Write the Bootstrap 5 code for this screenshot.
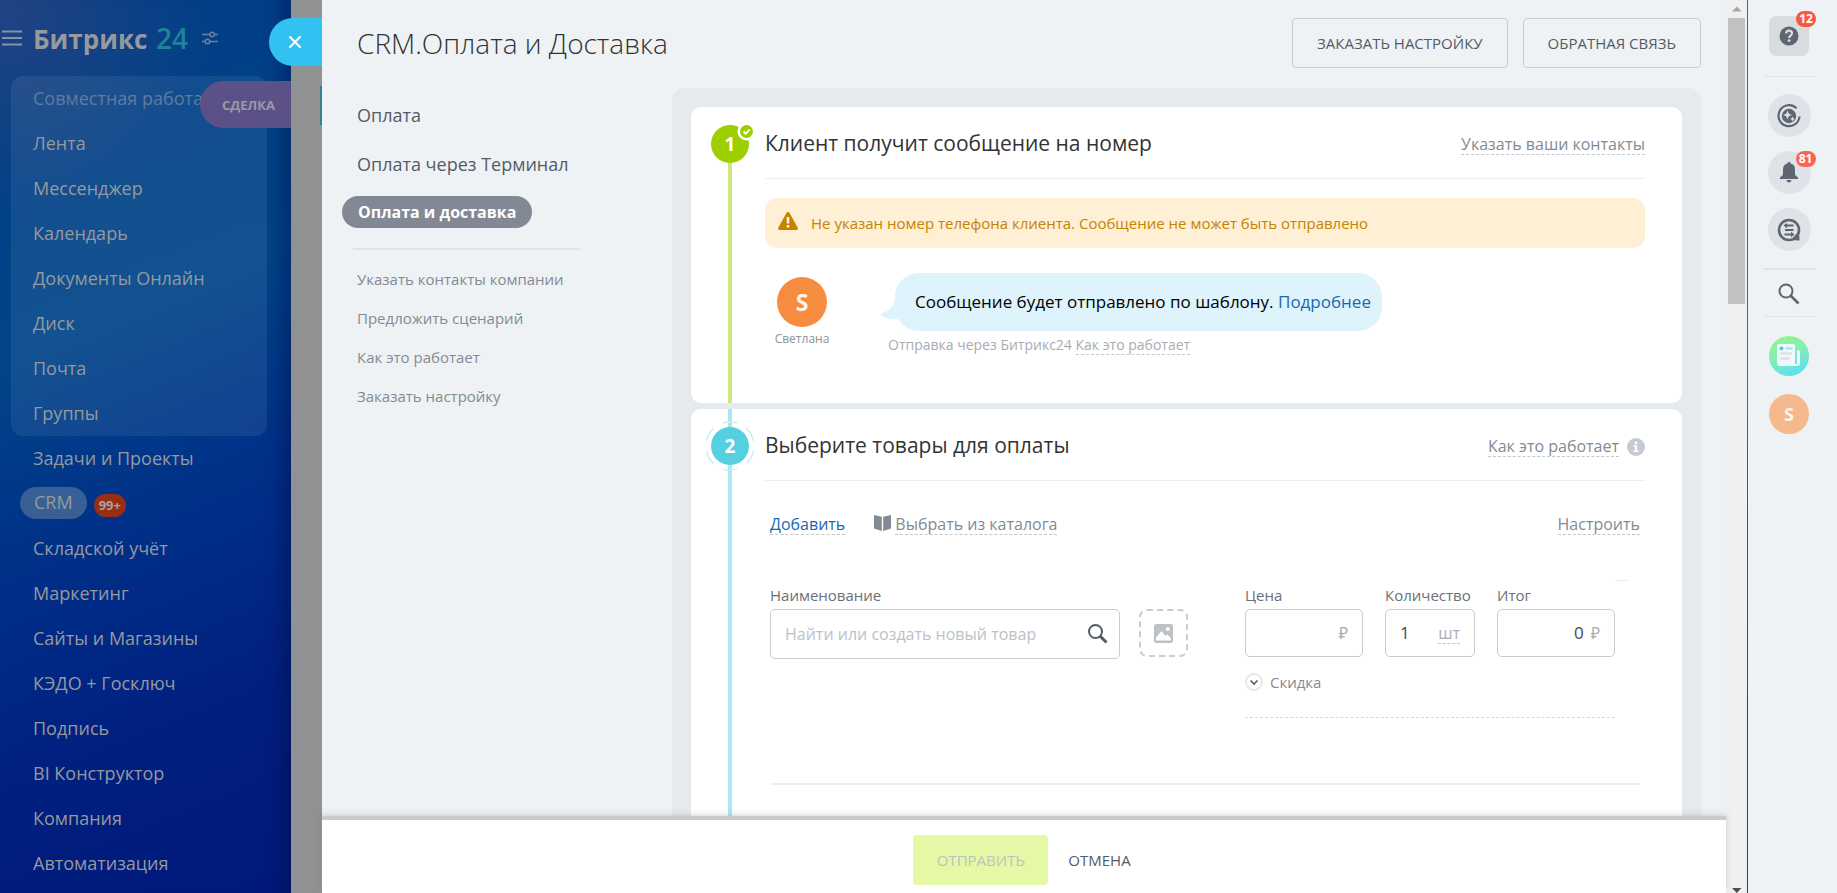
<!DOCTYPE html>
<html lang="ru">
<head>
<meta charset="utf-8">
<meta name="viewport" content="width=device-width, initial-scale=1">
<title>CRM.Оплата и Доставка</title>
<link href="https://cdn.jsdelivr.net/npm/bootstrap@5.3.0/dist/css/bootstrap.min.css" rel="stylesheet">
<style>
body{font-family:"Open Sans","Noto Sans",sans-serif;font-size:16px;line-height:24px;color:#333;background:#eef2f4}
a{text-decoration:none}
svg{display:block;flex:none}
/* left menu */
.side{width:291px;background:radial-gradient(circle at 0 0,rgba(45,70,130,.75),rgba(45,70,130,0) 220px),linear-gradient(158deg,#003c86 0,#004588 36%,#002f88 58%,#002080 78%,#00197a 100%);box-shadow:inset -24px 0 20px -16px rgba(0,10,70,.45)}
.side-head{height:76px;padding-left:2px;color:#98999d}
.brand{font-size:26px;font-weight:700;line-height:36px;color:#98999d;margin:0 14px 0 11px}
.brand span{color:#1e8299;font-size:28px;font-weight:600;margin-left:2px}
.menu-box{margin:0 24px 0 11px;border-radius:12px;background:rgba(255,255,255,.07)}
.menu-link{display:flex;align-items:center;height:45px;padding:0 0 1px 33px;font-size:18px;color:#97999d}
.menu-box .menu-link{padding-left:22px}
.menu-link.dim{color:#5f7c9d}
.menu-pill{background:#386094;border-radius:16px;height:32px;line-height:31px;padding:0 14px;margin-left:-13px}
.menu-count{background:#992e12;color:#a9a4a4;font-size:13px;font-weight:700;border-radius:12px;height:23px;line-height:22px;padding:0 5px;margin:4px 0 0 7px}
.strip{width:31px;background:#909192}
/* tabs sticking out of the panel */
.close-tab{left:269px;top:18px;width:53px;height:48px;border-radius:24px 0 0 24px;background:#32c2f2;border:0;padding:0 0 0 16px}
.deal-tab{left:200px;top:81px;width:91px;height:47px;line-height:48px;border-radius:24px 0 0 24px;background:#5b5187;color:#9b98a4;font-size:13px;font-weight:700;padding-left:22px}
.teal-tab{left:320px;top:86px;width:2px;height:39px;background:#2f8490}
/* panel */
.panel{min-width:0}
.panel-head{padding:18px 25px 20px 35px}
.panel-head h1{font-size:28px;font-weight:300;line-height:50px;margin:0}
.btn-line{height:50px;border:1px solid #c6cdd3;border-radius:4px;color:#525c69;font-size:15px;font-weight:500;padding:0 24px}
.btn-line + .btn-line{margin-left:15px}
.scenes{width:350px;padding:11px 0 0 35px;flex:none}
.scene{display:block;font-size:18px;line-height:32px;color:#525c69;margin-bottom:17px}
.scene.active{align-self:flex-start;background:#828894;color:#fff;font-weight:700;font-size:16px;border-radius:16px;padding:0 16px;margin:-1px 0 20px -15px}
.scene-sep{width:227px;height:2px;background:#dfe3e6;margin:0 0 18px -4px}
.help-link{display:block;font-size:15px;line-height:23px;color:#828b95;margin-bottom:16px}
.stage{background:#e5eaee;border-radius:12px 12px 0 0;padding:19px 19px 0;margin-right:25px}
.step{position:relative;background:#fff;border-radius:10px;padding:0 37px 0 74px;margin-bottom:6px}
.step::before{content:"";position:absolute;left:37px;top:0;bottom:0;width:4px;background:#ace9ef}
.step.done::before{top:37px;background:#cbe77f}
.step-num{position:absolute;left:20px;top:18px;width:38px;height:38px;border-radius:50%;background:#55d0e0;color:#fff;font-size:19px;font-weight:700;line-height:38px;text-align:center}
.done .step-num{background:#9dcf00}
.step-check{position:absolute;right:-7px;top:-3px}
.step-ring{position:absolute;left:-6px;top:-6px}
.step-head{height:72px;border-bottom:1px solid #eceef0}
.step-head h2{font-size:21px;font-weight:400;line-height:28px;margin:0}
.dash{border-bottom:1px dashed #c3c7cc;color:#828b95;line-height:20px}
.step-head .dash{margin-top:3px}
.warn{height:50px;border-radius:12px;background:#ffefd5;color:#c48300;font-size:15px;margin-top:19px;padding:0 13px}
.warn svg{margin:-4px 13px 0 0}
.message{margin-top:25px}
.sender{width:74px}
.avatar{width:50px;height:50px;border-radius:50%;background:#f68c40;color:#fff3ea;font-size:23px;font-weight:700;line-height:50px;text-align:center}
.who{font-size:12px;line-height:20px;color:#8b9199;display:block;margin-top:2px}
.talk{margin-left:49px}
.bubble{position:relative;height:58px;line-height:58px;border-radius:24px;background:#def3fc;color:#000;font-size:17px;padding:0 11px 0 20px;margin-left:7px}
.bubble a,.blue{color:#2067b0}
.bubble svg{position:absolute;left:-15px;top:27px}
.via{font-size:14px;line-height:20px;color:#a8adb4;margin-top:4px}
.via .dash{color:#a8adb4}
/* product row */
.tools{font-size:16px;padding:33px 5px 0}
.tools svg{margin:-4px 4px 0 29px}
.product{margin:50px 0 0 5px}
.field label{font-size:15px;line-height:20px;color:#6a7079;display:block;margin-bottom:4px}
.box{display:flex;align-items:center;border:1px solid #c6cdd3;border-radius:5px;height:48px;padding:0 14px}
.box input{border:0;outline:0;padding:0;min-width:0;flex:1;color:#424956;background:none;font-size:17px}
.box input::placeholder{color:#bdc1c6;opacity:1}
.find{height:50px;padding-right:11px}
.find input{font-size:16px}
.unit{color:#a8adb4}
.unit-gap{margin-left:7px}
.pic-wrap{padding:24px 57px 0 19px}
.pic{width:49px;height:48px;border:2px dashed #c6cdd3;border-radius:8px;background:none;padding:0}
.fields{gap:22px}
.wide{width:118px}
.slim{width:90px}
.discount{border:0;background:none;padding:0;color:#828b95;font-size:15px;margin-top:13px}
.discount svg{margin-right:7px}
.dash-sep{border-top:1px dashed #d5d8dc;margin-top:23px}
.row-tick{width:12px;height:1px;background:#e4e6e9;margin:-5px 18px 0 0}
.total-sep{height:2px;background:#eceef0;margin:65px 5px 0}
/* footer */
.footer-bar{height:73px;padding:7px 4px 0 0;background:#fff;box-shadow:0 -4px 1px #c8cbcd,0 -5px 7px rgba(60,70,80,.2);position:relative}
.btn-send,.btn-send:disabled{background:#e4f8a5;color:#bfc3bd;border:0;border-radius:4px;height:50px;width:135px;font-size:15px;font-weight:500;opacity:1;padding:0}
.btn-cancel{color:#525c69;border:0;font-size:15px;font-weight:500;padding:0;margin-left:20px}
.scrollbar-col{width:21px;background:#f0f0f0;padding:0 2px}
.thumb{width:17px;height:32vh;background:#c1c1c1}
.edge{width:1px;background:linear-gradient(#0f70d0 0,#0b6fd0 45%,#0a3cd8 85%,#0a3ae0)}
/* right rail */
.rail{width:89px;padding:16px 7px 0 0}
.rail-sep{width:53px;background:#e0e4e8;height:1px}
.r-btn{width:43px;height:43px;border-radius:50%;background:#dfe2e7;border:0;padding:0;position:relative}
.r-help{width:40px;height:40px;border-radius:8px;background:#d8dcdf}
.r-count{position:absolute;right:-5px;top:0;height:16px;min-width:20px;line-height:15px;border-radius:8px;background:#fc6452;color:#fff;font-size:12px;font-weight:700;text-align:center}
.r-help .r-count{top:-5px;right:-7px;background:#fa5742}
.r-face{width:40px;height:40px;background:#f5b98d;color:#fff3ea;font-size:18px;font-weight:700;line-height:40px}
.mt-a{margin-top:20px}.mt-b{margin-top:17px}.mt-c{margin-top:14px}.mt-d{margin-top:17px;height:2px}
.mt-e{margin-top:13px}.mt-f{margin-top:11px}.mt-g{margin-top:19px}.mt-h{margin-top:18px}
</style>
</head>
<body class="vh-100 overflow-hidden d-flex position-relative">
<nav class="side flex-shrink-0 overflow-hidden">
  <div class="side-head d-flex align-items-center">
    <svg width="20" height="16" stroke="#8491a6" stroke-width="2"><path d="M0 1.500h20M0 8h20M0 14.500h20"/></svg>
    <div class="brand text-nowrap">Битрикс <span>24</span></div>
    <svg width="16" height="14" fill="none" stroke="#6880a6" stroke-width="1.500"><path d="M0 3.500h8M12.500 3.500H16M0 10.500h3M8 10.500h8"/><circle cx="10.200" cy="3.500" r="2.200"/><circle cx="5.500" cy="10.500" r="2.200"/></svg>
  </div>
  <div class="menu-box">
    <a href="#" class="menu-link dim">Совместная работа</a>
    <a href="#" class="menu-link">Лента</a>
    <a href="#" class="menu-link">Мессенджер</a>
    <a href="#" class="menu-link">Календарь</a>
    <a href="#" class="menu-link">Документы Онлайн</a>
    <a href="#" class="menu-link">Диск</a>
    <a href="#" class="menu-link">Почта</a>
    <a href="#" class="menu-link">Группы</a>
  </div>
  <a href="#" class="menu-link">Задачи и Проекты</a>
  <a href="#" class="menu-link"><span class="menu-pill">CRM</span><span class="menu-count">99+</span></a>
  <a href="#" class="menu-link">Складской учёт</a>
  <a href="#" class="menu-link">Маркетинг</a>
  <a href="#" class="menu-link">Сайты и Магазины</a>
  <a href="#" class="menu-link">КЭДО + Госключ</a>
  <a href="#" class="menu-link">Подпись</a>
  <a href="#" class="menu-link">BI Конструктор</a>
  <a href="#" class="menu-link">Компания</a>
  <a href="#" class="menu-link">Автоматизация</a>
</nav>
<div class="strip flex-shrink-0"></div>
<div class="deal-tab position-absolute">СДЕЛКА</div>
<div class="teal-tab position-absolute"></div>
<button class="close-tab position-absolute d-flex align-items-center" aria-label="Закрыть"><svg class="ms-1" width="12" height="12" stroke="#fff" stroke-width="2" stroke-linecap="round"><path d="M1 1l10 10M11 1L1 11"/></svg></button>

<main class="panel flex-grow-1 d-flex flex-column">
  <div class="flex-grow-1 overflow-hidden">
    <header class="panel-head d-flex">
      <h1 class="flex-grow-1">CRM.Оплата и Доставка</h1>
      <button class="btn btn-line">ЗАКАЗАТЬ НАСТРОЙКУ</button>
      <button class="btn btn-line">ОБРАТНАЯ СВЯЗЬ</button>
    </header>
    <div class="d-flex align-items-start">
      <aside class="scenes d-flex flex-column">
        <a href="#" class="scene">Оплата</a>
        <a href="#" class="scene">Оплата через Терминал</a>
        <a href="#" class="scene active">Оплата и доставка</a>
        <div class="scene-sep"></div>
        <a href="#" class="help-link">Указать контакты компании</a>
        <a href="#" class="help-link">Предложить сценарий</a>
        <a href="#" class="help-link">Как это работает</a>
        <a href="#" class="help-link">Заказать настройку</a>
      </aside>
      <div class="stage flex-grow-1">
        <section class="step done pb-5">
          <div class="step-num">1<svg class="step-check" width="19" height="19"><circle cx="9.500" cy="9.500" r="9" fill="#fff"/><circle cx="9.500" cy="9.500" r="6.500" fill="#9dcf00"/><path d="M6.500 9.500l2.200 2.200 4-4" fill="none" stroke="#fff" stroke-width="1.800"/></svg></div>
          <div class="step-head d-flex align-items-center justify-content-between">
            <h2>Клиент получит сообщение на номер</h2>
            <a href="#" class="dash">Указать ваши контакты</a>
          </div>
          <div class="warn d-flex align-items-center">
            <svg width="20" height="18" viewBox="0 0 20 18"><path d="M10 0c.7 0 1.200.3 1.600 1l8 14.500c.7 1.300 0 2.500-1.400 2.500H1.800C.4 18-.3 16.800.4 15.500L8.400 1c.4-.7.900-1 1.600-1z" fill="#c48300"/><path d="M8.700 5h2.600v6.500H8.700zM8.700 13h2.600v2.500H8.700z" fill="#fff0d6"/></svg>
            <span>Не указан номер телефона клиента. Сообщение не может быть отправлено</span>
          </div>
          <div class="message d-flex">
            <div class="sender text-center"><div class="avatar mx-auto mt-1">S</div><span class="who">Светлана</span></div>
            <div class="talk">
              <div class="bubble">Сообщение будет отправлено по шаблону. <a href="#">Подробнее</a><svg width="20" height="20"><path d="M15 0C13 7 8 12 0 14c4 4 11 6 18 5l2-10z" fill="#def3fc"/></svg></div>
              <div class="via">Отправка через Битрикс24 <a href="#" class="dash">Как это работает</a></div>
            </div>
          </div>
        </section>
        <section class="step pb-5">
          <div class="step-num"><svg class="step-ring" width="50" height="50"><circle cx="25" cy="25" r="24" fill="none" stroke="#c5f0f5" stroke-width="1.500" stroke-dasharray="14 11.100" stroke-dashoffset="-5"/></svg>2</div>
          <div class="step-head d-flex align-items-center">
            <h2 class="flex-grow-1">Выберите товары для оплаты</h2>
            <a href="#" class="dash">Как это работает</a>
            <svg class="ms-2 mt-1" width="18" height="18"><circle cx="9" cy="9" r="9" fill="#c6cad3"/><circle cx="9" cy="4.800" r="1.500" fill="#fff"/><path d="M6.500 7.200h3.700v5.300h1.300V14h-5v-1.500H8V8.700H6.500z" fill="#fff"/></svg>
          </div>
          <div class="tools d-flex align-items-center">
            <a href="#" class="dash blue">Добавить</a>
            <svg width="17" height="16"><path d="M0 0l7.800 1.800V16L0 13.500zM17 0L9.200 1.800V16l7.800-2.500z" fill="#828b95"/></svg>
            <a href="#" class="dash">Выбрать из каталога</a>
            <a href="#" class="dash ms-auto">Настроить</a>
          </div>
          <div class="product d-flex">
            <div class="field flex-grow-1"><label for="name">Наименование</label>
              <div class="box find"><input id="name" placeholder="Найти или создать новый товар"><svg width="20" height="20" fill="none" stroke="#525c69"><circle cx="7.500" cy="7.500" r="6.500" stroke-width="2"/><path d="M12 12l6.500 6.500" stroke-width="3"/></svg></div></div>
            <div class="pic-wrap"><button class="pic d-flex align-items-center justify-content-center" aria-label="Фото"><svg width="19" height="19"><rect width="19" height="19" rx="2.500" fill="#bdc1c6"/><circle cx="13.800" cy="5" r="2" fill="#fff"/><path d="M2 16.500v-3L7.500 7l4 5 2-1.500 3.500 4v2z" fill="#fff"/></svg></button></div>
            <div class="prices">
              <div class="d-flex fields">
                <div class="field wide"><label for="price">Цена</label><div class="box"><input id="price"><span class="unit">₽</span></div></div>
                <div class="field slim"><label for="qty">Количество</label><div class="box"><input id="qty" value="1"><a href="#" class="dash unit">шт</a></div></div>
                <div class="field wide"><label for="sum">Итог</label><div class="box"><input id="sum" class="text-end" value="0"><span class="unit unit-gap">₽</span></div></div>
              </div>
              <button class="discount d-flex align-items-center"><svg width="18" height="18" fill="none"><circle cx="9" cy="9" r="8" stroke="#e4e6e9" stroke-width="1.800"/><path d="M5.500 7.500L9 11l3.500-3.500" stroke="#525c69" stroke-width="1.600"/></svg>Скидка</button>
              <div class="dash-sep"></div>
            </div>
            <div class="row-tick"></div>
          </div>
          <div class="total-sep"></div>
        </section>
      </div>
    </div>
  </div>
  <footer class="footer-bar d-flex align-items-center justify-content-center flex-shrink-0">
    <button class="btn btn-send" disabled>ОТПРАВИТЬ</button>
    <button class="btn btn-cancel">ОТМЕНА</button>
  </footer>
</main>
<div class="scrollbar-col flex-shrink-0 d-flex flex-column">
  <svg width="17" height="18"><path d="M4 11.500l5-5 4.500 5z" fill="#a3a3a3"/></svg>
  <div class="thumb"></div>
  <svg class="mt-auto" width="17" height="6"><path d="M4 1h9.500l-4.700 5z" fill="#505050"/></svg>
</div>
<div class="edge flex-shrink-0"></div>
<aside class="rail flex-shrink-0 d-flex flex-column align-items-center">
  <button class="r-btn r-help d-flex align-items-center justify-content-center" aria-label="Помощь"><svg width="20" height="20"><circle cx="10" cy="10" r="9.500" fill="#5d6672"/><path d="M7 7.500C7.200 5.500 8.500 4.700 10 4.700c1.800 0 3 1 3 2.600 0 2.200-2.900 2.300-2.900 4.700" fill="none" stroke="#d8dcdf" stroke-width="2.200"/><circle cx="10.100" cy="14.600" r="1.400" fill="#d8dcdf"/></svg><span class="r-count">12</span></button>
  <div class="rail-sep mt-a"></div>
  <button class="r-btn d-flex align-items-center justify-content-center mt-b" aria-label="CoPilot"><svg width="24" height="24" fill="none" stroke="#5d6672"><path d="M19.500 4.300A10.500 10.500 0 1 0 22.500 12.500" stroke-width="2.200"/><circle cx="12" cy="12" r="7.200" fill="#5d6672" stroke="none"/><path d="M10.500 6.500l1.300 3.200 3.200 1.300-3.200 1.300-1.300 3.200-1.300-3.200L6 11l3.200-1.300zM15.500 12.500l.8 1.700 1.700.8-1.700.8-.8 1.700-.8-1.700-1.700-.8 1.700-.8z" fill="#dfe2e7" stroke="none"/></svg></button>
  <button class="r-btn d-flex align-items-center justify-content-center mt-c" aria-label="Уведомления"><svg width="20" height="21" fill="#5d6672"><path d="M10 0c1 0 1.700.7 1.700 1.600C14.600 2.300 16 4.500 16 7.500V12c0 1.500 2 2.500 3 3.300V17H1v-1.700C2 14.500 4 13.500 4 12V7.500c0-3 1.400-5.200 4.300-5.900C8.300.7 9 0 10 0zM7.500 18h5c-.3 1.500-1.200 2.500-2.500 2.500S7.800 19.500 7.500 18z"/></svg><span class="r-count">81</span></button>
  <button class="r-btn d-flex align-items-center justify-content-center mt-c" aria-label="Чат"><svg width="24" height="24" fill="none" stroke="#5d6672"><circle cx="12" cy="12" r="10" stroke-width="2.600"/><path d="M22 13l.5 9.500L14 22z" fill="#5d6672" stroke="none"/><path d="M8 7.500h8.500M8 12h8.500M7.500 16.500H16" stroke-width="2"/><path d="M10 4.800v5.400L6.500 7.500zM14 13.800v5.400l3.500-2.700z" fill="#5d6672" stroke="none"/></svg></button>
  <div class="rail-sep mt-d"></div>
  <button class="btn p-0 border-0 mt-e" aria-label="Поиск"><svg width="22" height="22" fill="none" stroke="#5d6672"><circle cx="8" cy="8" r="6.500" stroke-width="2"/><path d="M12.500 12.500l8 8" stroke-width="2.600"/></svg></button>
  <div class="rail-sep mt-f"></div>
  <button class="btn p-0 border-0 rounded-circle mt-g" aria-label="Новости"><svg width="40" height="40"><defs><linearGradient id="g" x2=".4" y2="1"><stop offset="0" stop-color="#98f582"/><stop offset=".5" stop-color="#85efb0"/><stop offset="1" stop-color="#5fe2ee"/></linearGradient></defs><circle cx="20" cy="20" r="20" fill="url(#g)"/><path d="M10 8h14a2 2 0 0 1 2 2v18h2V14h1a2 2 0 0 1 2 2v11a3 3 0 0 1-3 3H11a3 3 0 0 1-3-3V10a2 2 0 0 1 2-2z" fill="#f0f8fb"/><circle cx="12.500" cy="12.500" r="2" fill="#4fc9ea"/><path d="M17.500 12.500h5" stroke="#a5e8f5" stroke-width="2.400" stroke-linecap="round"/><path d="M12 17.500h10M12 22.500h8" stroke="#dde0e5" stroke-width="2.400" stroke-linecap="round"/></svg></button>
  <button class="btn r-btn r-face border-0 mt-h" aria-label="Светлана">S</button>
</aside>
<script src="https://cdn.jsdelivr.net/npm/bootstrap@5.3.0/dist/js/bootstrap.bundle.min.js"></script>
</body>
</html>
